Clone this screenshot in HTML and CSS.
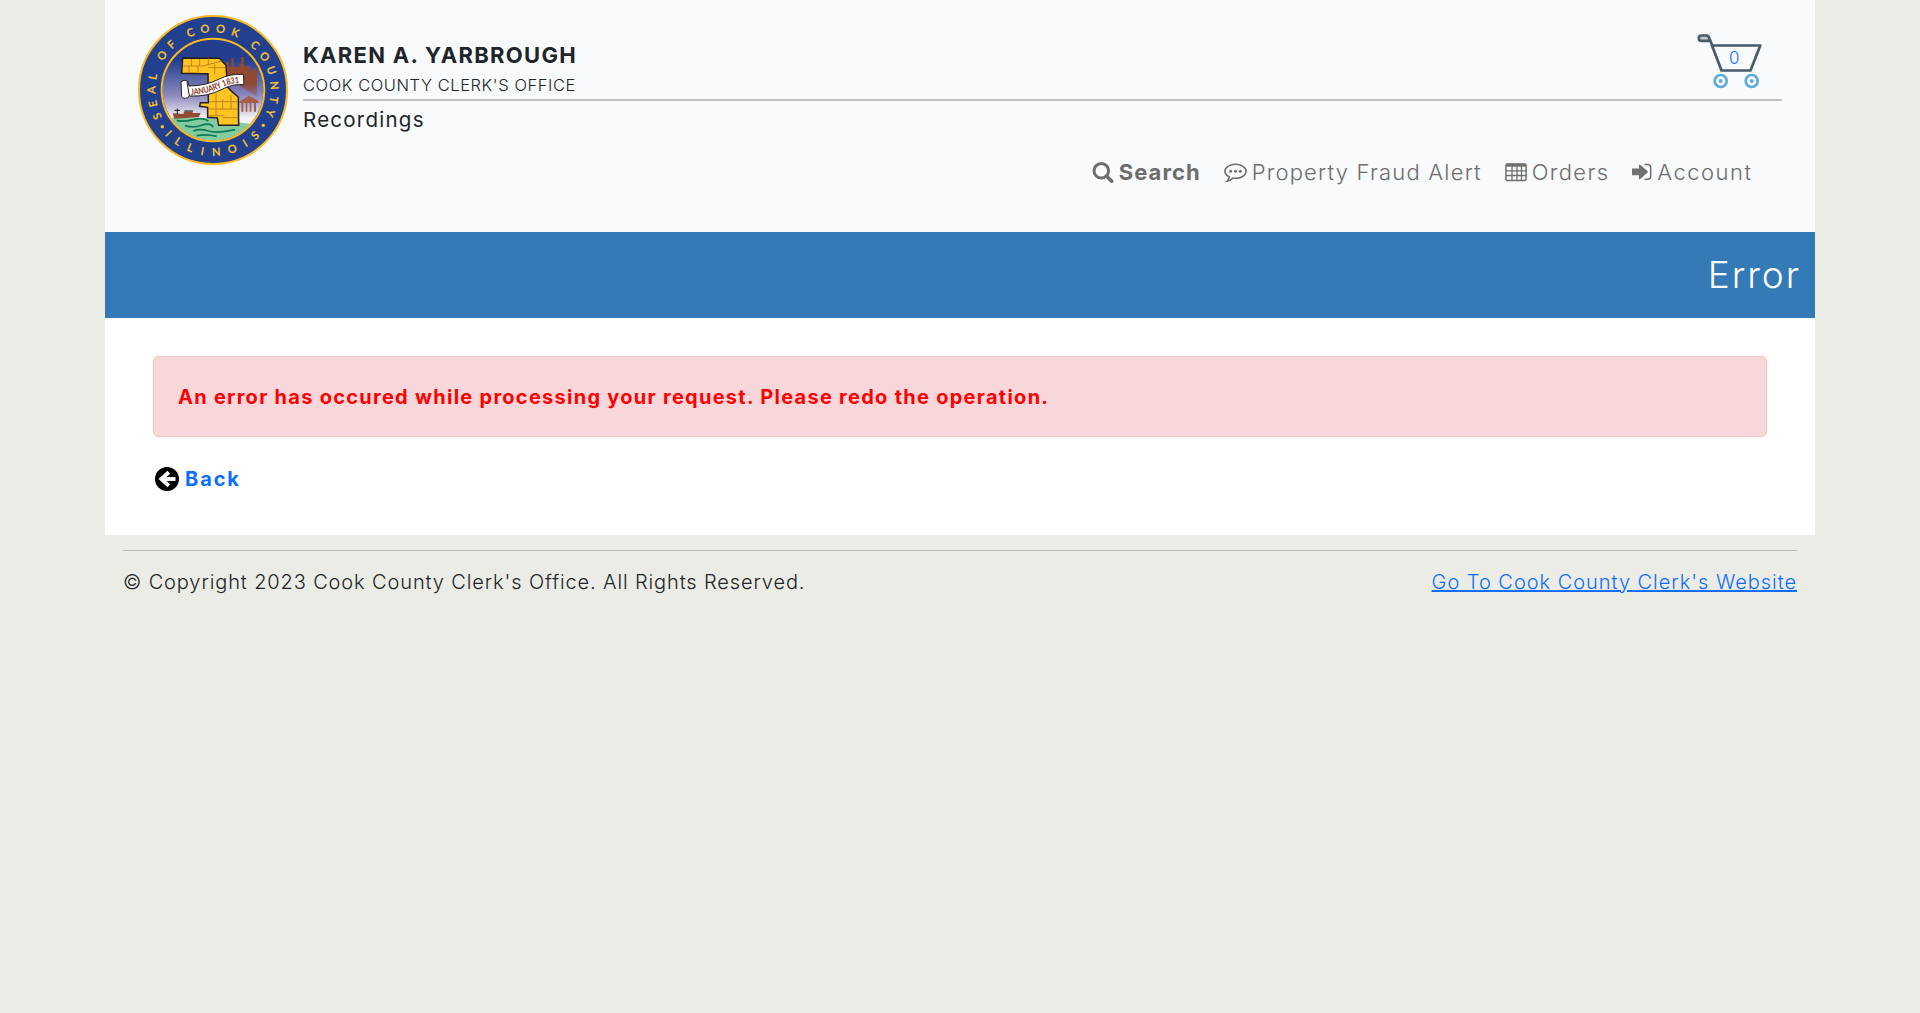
FILE: index.html
```html
<!DOCTYPE html>
<html lang="en">
<head>
<meta charset="utf-8">
<title>Error - Recordings</title>
<link rel="stylesheet" href="styles.css">
</head>
<body>
<div class="page">
  <header class="header">
    <svg class="seal" viewBox="24 30 450 450" role="img" aria-label="Seal of Cook County">
      <defs>
        <linearGradient id="sky" x1="0" y1="0" x2="0" y2="1"><stop offset=".2" stop-color="#233e8f"/><stop offset=".55" stop-color="#8b88bd"/><stop offset=".78" stop-color="#f4f1f7"/></linearGradient>
        <linearGradient id="city" x1="0" y1="0" x2="0" y2="1"><stop offset=".65" stop-color="#91492f"/><stop offset="1" stop-color="#91492f" stop-opacity=".2"/></linearGradient>
        <clipPath id="disc"><circle cx="249" cy="255" r="151"/></clipPath>
        <path id="arcTop" d="M96.300 336.200A173 173 0 1 1 403 333.500"/>
        <path id="arcBottom" d="M104.200 390A198 198 0 0 0 392.600 391"/>
      </defs>
      <circle cx="249" cy="255" r="222" fill="#23408f" stroke="#fdb920" stroke-width="6"/>
      <g clip-path="url(#disc)">
        <path fill="url(#sky)" d="M98 104h302v302H98z"/>
        <path fill="#84cba0" d="M98 340c40-5 80 2 135-2l170 25v60H98z"/>
        <path fill="url(#city)" d="M288 210v-38h8v14h8v-26h7v26h17v-10h5v-20h8v28h20v16h6v-8h14v84l-51-32-12-30z"/>
        <path fill="none" stroke="#0c7a54" stroke-width="5" d="M140 346q20 6 50-2t45 4M165 362q25 8 50-1t35 5M190 378q20-8 45 0t80-4M200 392q30-6 60 2"/>
        <path fill="#91492f" d="M128 325l32 2 2-7h26v4h24l-6 13-73 4z"/>
        <path fill="none" stroke="#171717" stroke-width="3" d="M133 316h17M142 311v16M163 318h26"/>
        <path fill="#a35f48" d="M329 288l28-15 29 15v6h-57zM334 294h6v26h-6zm13 0h5v26h-5zm12 0h5v26h-5zm13 0h6v26h-6z"/>
      </g>
      <path fill="#ffc423" stroke="#231f20" stroke-width="4.500" d="M158 159l110 1 20 21 4 65 13 13 20 17 1 85h-60l-4-22-29-2v-30l-24-3 2-11h24l-1-87h-13l-66-1z"/>
      <path fill="none" stroke="#b27a18" stroke-width="2.500" d="M158 183h60l20-5 38-10M184 162v21M177 183v22M204 183v23M209 162v21M235 160v20M235 188h50M254 178v30M238 290h83M258 266v66M278 283v30M303 270v42M235 312h88M235 332h48M278 338h45"/>
      <path fill="#fff" stroke="#231f20" stroke-width="3" d="M153 231q8-9 20-3l4 15Q227 243 268 222 300 206 340 208L342 239Q308 236 276 253 232 276 178 273l-5 5q-14 5-18-3zM171 230l7 43"/>
      <path id="bannerLine" fill="none" d="M183 270Q230 268 272 248Q303 233 334 234"/>
      <text class="banner-text"><textPath href="#bannerLine" textLength="150" lengthAdjust="spacingAndGlyphs">JANUARY 1831</textPath></text>
      <circle cx="249" cy="255" r="154" fill="none" stroke="#fdb920" stroke-width="6"/>
      <text class="seal-text"><textPath href="#arcTop" textLength="704">SEAL OF COOK COUNTY</textPath></text>
      <text class="seal-text"><textPath href="#arcBottom" textLength="319">ILLINOIS</textPath></text>
      <circle cx="97" cy="365" r="5" fill="#fdc92b"/><circle cx="400" cy="361" r="5" fill="#fdc92b"/>
    </svg>
    <div class="masthead">
      <div class="identity">
        <div class="titles">
          <div class="clerk">KAREN A. YARBROUGH</div>
          <div class="office">COOK COUNTY CLERK'S OFFICE</div>
        </div>
        <a class="cart">
          <svg viewBox="0 0 66 56" width="66" height="56" fill="none">
            <path d="M15 11.500H63.300L53.500 36.500H24.500Z" stroke="#4b5a6b" stroke-width="2.700" stroke-linejoin="round"/>
            <path d="M15.500 12L12 3.500Q11.500 1.500 9.500 1.500H4.500a2.700 2.700 0 0 0 0 5.400H13" fill="#c3c9ca" stroke="#4b5a6b" stroke-width="2.700"/>
            <g stroke="#5dabdc" stroke-width="2.700"><circle cx="23.700" cy="47" r="6"/><circle cx="54.700" cy="47" r="6"/></g>
            <g fill="#5dabdc"><circle cx="23.700" cy="47" r="2"/><circle cx="54.700" cy="47" r="2"/></g>
          </svg>
          <span class="count">0</span>
        </a>
      </div>
      <div class="section">Recordings</div>
      <nav class="nav">
        <a class="active"><svg class="icon" viewBox="0 0 22 21" width="22" height="21" fill="none" stroke="#6d6d6d"><circle cx="9.300" cy="8.800" r="7.300" stroke-width="3"/><path d="M14.500 14l5.200 5.200" stroke-width="3.600" stroke-linecap="round"/></svg><span>Search</span></a>
        <a class="fraud"><svg class="icon" viewBox="0 0 23 21" width="23" height="21" fill="none" stroke="#707070" stroke-width="1.600"><path d="M11.500 2.300c5.900 0 10.600 3.100 10.600 7s-4.700 7-10.600 7q-1.400 0-2.700-.2Q6.300 18.700 3 19.300q2-2 2.200-4.500C2.600 13.500.9 11.500.9 9.300c0-3.900 4.700-7 10.600-7z"/><g fill="#707070" stroke="none"><circle cx="6.700" cy="9.300" r="1.500"/><circle cx="11.500" cy="9.300" r="1.500"/><circle cx="16.300" cy="9.300" r="1.500"/></g></svg><span>Property Fraud Alert</span></a>
        <a class="orders"><svg class="icon" viewBox="0 0 22 19" width="22" height="19" fill="none" stroke="#707070" stroke-width="1.500"><rect x=".9" y="1" width="20.200" height="16.600" rx="1.500"/><path d="M1 2.200h20" stroke-width="3"/><path d="M1 7.800h20M1 12.500h20M7 3v15M12 3v15M16.500 3v15" stroke-width="1.300"/></svg><span>Orders</span></a>
        <a class="account"><svg class="icon" viewBox="0 0 20 18" width="20" height="18"><path fill="#707070" d="M0 5.500h7V2.300Q7 .8 8.200 1.800l7.200 6.300q.8.800 0 1.600L8.200 16Q7 17 7 15.500v-3.300H0z"/><path fill="none" stroke="#707070" stroke-width="1.500" d="M12.500 1.500h3.200q3 0 3 3v8.700q0 3-3 3h-3.200"/></svg><span>Account</span></a>
      </nav>
    </div>
  </header>
  <div class="banner"><h1>Error</h1></div>
  <main class="content">
    <div class="alert">An error has occured while processing your request. Please redo the operation.</div>
    <a class="back"><svg viewBox="0 0 24 24" width="24" height="24"><circle cx="12" cy="12" r="12"/><path fill="none" stroke="#fff" stroke-width="4" d="M13.800 5.300L6.500 12l7.300 6.700M7 12h13.500"/></svg><span>Back</span></a>
  </main>
</div>
<footer class="footer">
  <span class="copyright">© Copyright 2023 Cook County Clerk's Office. All Rights Reserved.</span>
  <a class="site-link">Go To Cook County Clerk's Website</a>
</footer>
</body>
</html>
```
FILE: styles.css
```css
* { box-sizing: border-box; }
body { margin: 0; background: #ebece6; color: #212529; font: 300 20px/30px Inter, "Open Sans", sans-serif; }
.page { width: 1710px; margin: 0 auto; background: #fff; }
.header { display: flex; align-items: flex-start; gap: 15px; height: 232px; padding: 15px 33px 0 33px; background: #f8fafc; }
.seal { width: 150px; height: 150px; flex: none; }
.seal-text { fill: #fdc92b; stroke: #fdc92b; stroke-width: .8px; font: 500 33px Lato, sans-serif; }
.banner-text { fill: #91492f; font: 900 26px Lato, sans-serif; }
.masthead { flex: 1; }
.identity { display: flex; justify-content: space-between; height: 86px; padding-top: 18px; border-bottom: 2px solid #bfc1c3; }
.clerk { font-size: 22px; font-weight: 700; line-height: 44px; height: 36px; letter-spacing: 1.300px; }
.office { font-size: 16.500px; line-height: 32px; letter-spacing: .560px; }
.cart { position: relative; width: 66px; margin-right: 19px; padding-top: 1px; }
.count { position: absolute; left: 32px; top: 10px; font-size: 17px; color: #0d6efd; }
.section { font-size: 20.500px; font-weight: 400; line-height: 38px; height: 38px; letter-spacing: 1.250px; }
.nav { display: flex; justify-content: flex-end; padding: 18px 31px 0 0; font-size: 22px; color: #6d6d6d; }
.nav a { display: flex; align-items: center; gap: 5px; margin-left: 24px; }
.active { font-weight: 700; }
.active span { letter-spacing: 1.080px; margin-right: -1.080px; }
.fraud span { letter-spacing: 1.200px; margin-right: -1.200px; }
.orders span { letter-spacing: 1.400px; margin-right: -1.400px; }
.account span { letter-spacing: 1.500px; margin-right: -1.500px; }
.banner { height: 86px; padding: 0 16px; background: #337ab7; color: #fff; text-align: right; }
.banner h1 { margin: 0 -1.900px 0 0; font-size: 37px; font-weight: 300; line-height: 86px; letter-spacing: 1.900px; }
.content { height: 217px; padding: 38px 48px 0; }
.alert { height: 81px; padding: 25px 24px 24px; border: 1px solid #f5c2c7; border-radius: 5px; background: #f8d7da; color: #f00; font-weight: 700; letter-spacing: 1.270px; }
.back { display: flex; align-items: center; gap: 6px; margin: 27px 0 0 2px; color: #0d6efd; font-weight: 700; letter-spacing: 1.900px; }
.footer { display: flex; justify-content: space-between; width: 1674px; margin: 15px auto 0; padding-top: 16px; border-top: 1px solid #b9bab7; }
.copyright { letter-spacing: .880px; }
.site-link { color: #0d6efd; text-decoration: underline; text-decoration-thickness: 2px; letter-spacing: .970px; }
```
